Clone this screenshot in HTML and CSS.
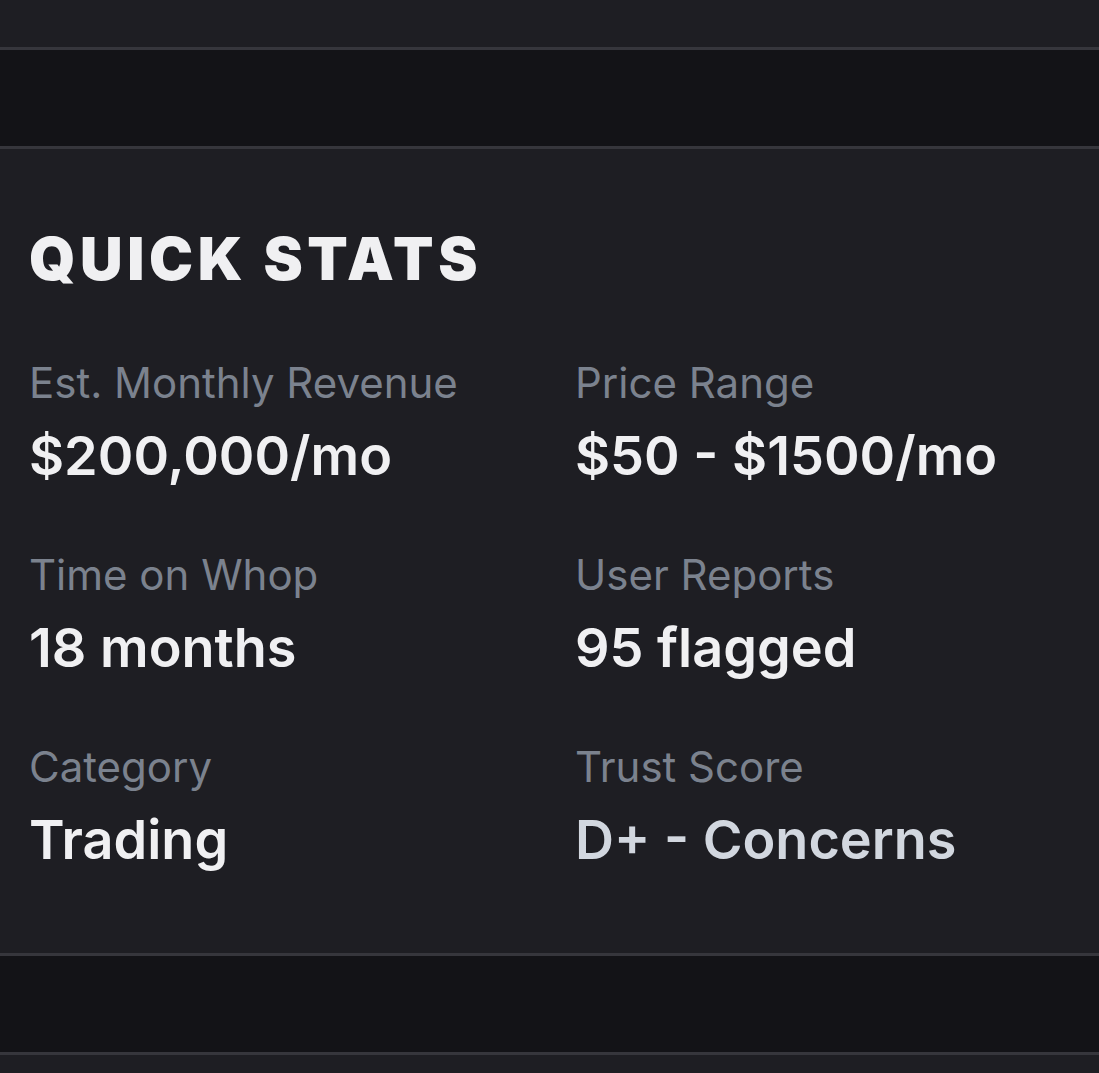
FILE: index.html
```html
<!DOCTYPE html>
<html lang="en">
<head>
<meta charset="utf-8">
<title>Quick Stats</title>
<link rel="stylesheet" href="styles.css">
</head>
<body>
<div class="page">
  <div class="strip strip-top"></div>
  <div class="band"></div>
  <section class="card">
    <h2 class="card-title">QUICK STATS</h2>
    <div class="stats">
      <div class="stat">
        <div class="stat-label">Est. Monthly Revenue</div>
        <div class="stat-value">$200,000/mo</div>
      </div>
      <div class="stat">
        <div class="stat-label">Price Range</div>
        <div class="stat-value">$50 - $1500/mo</div>
      </div>
      <div class="stat">
        <div class="stat-label">Time on Whop</div>
        <div class="stat-value">18 months</div>
      </div>
      <div class="stat">
        <div class="stat-label">User Reports</div>
        <div class="stat-value">95 flagged</div>
      </div>
      <div class="stat">
        <div class="stat-label">Category</div>
        <div class="stat-value">Trading</div>
      </div>
      <div class="stat">
        <div class="stat-label">Trust Score</div>
        <div class="stat-value stat-value-muted">D+ - Concerns</div>
      </div>
    </div>
  </section>
  <div class="band"></div>
  <div class="strip strip-bottom"></div>
</div>
</body>
</html>
```

FILE: styles.css
```css
* { box-sizing: border-box; }
html, body { margin: 0; padding: 0; }
body {
  background: #1e1e23;
  font-family: Inter, "Noto Sans", "Liberation Sans", sans-serif;
  color: #f0f0f2;
}
.page {
  display: flex;
  flex-direction: column;
  min-height: 1073px;
}
.strip-top {
  height: 50px;
  border-bottom: 3px solid #36363c;
  background: #1e1e23;
}
.band {
  height: 99px;
  background: #131317;
  border-bottom: 3px solid #36363c;
}
.card {
  background: #1e1e23;
  border-bottom: 3px solid #36363c;
  padding: 75px 29px 0 29px;
  height: 807px;
}
.card-title {
  margin: 0;
  font-family: Inter, "Liberation Sans", sans-serif;
  font-weight: 900;
  font-size: 59px;
  line-height: 70px;
  letter-spacing: 4.6px;
  color: #f0f0f2;
}
.stats {
  display: grid;
  grid-template-columns: 546px 1fr;
  row-gap: 62px;
  margin-top: 64px;
}
.stat-label {
  font-size: 42px;
  line-height: 50px;
  color: #7b828e;
}
.stat-value {
  margin-top: 16px;
  font-size: 54px;
  font-weight: 600;
  line-height: 64px;
  color: #f0f0f2;
}
.stat-value-muted { color: #d2d7df; }
.strip-bottom {
  flex: 1;
  background: #1e1e23;
}
```
